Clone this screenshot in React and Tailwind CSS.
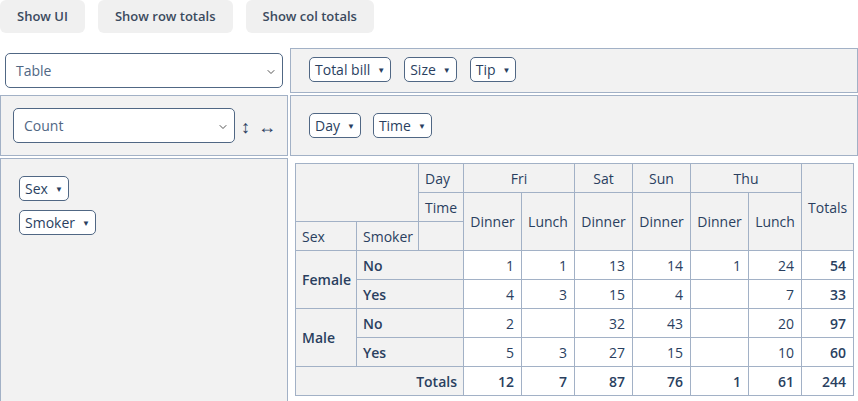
import { ChevronDown } from "lucide-react";

const font = { fontFamily: '"Open Sans", "Liberation Sans", sans-serif' };

const Chip = ({ label }) => (
  <span className="inline-flex items-center h-[25px] px-[5px] rounded-[5px] border border-[#506784] bg-white text-[14px] text-[#2a3f5f] whitespace-nowrap">
    {label}
    <span className="ml-[7px] text-[8px] leading-none">▼</span>
  </span>
);

const Select = ({ value, className }) => (
  <div
    className={`relative flex items-center h-[35px] rounded-[5px] border border-[#506784] bg-white text-[14px] text-[#506784] pl-[10px] ${className}`}
  >
    {value}
    <ChevronDown className="absolute right-[5px] top-[12px] w-[12px] h-[12px] text-[#555]" strokeWidth={2} />
  </div>
);

const rows = [
  { sex: "Female", smoker: "No", vals: [1, 1, 13, 14, 1, 24], total: 54 },
  { sex: "", smoker: "Yes", vals: [4, 3, 15, 4, "", 7], total: 33 },
  { sex: "Male", smoker: "No", vals: [2, "", 32, 43, "", 20], total: 97 },
  { sex: "", smoker: "Yes", vals: [5, 3, 27, 15, "", 10], total: 60 },
];

const th = "border border-[#a2b1c6] bg-[#f2f2f2] font-normal px-[6px] h-[29px]";
const rl = "border border-[#a2b1c6] bg-[#f2f2f2] font-semibold px-[6px] h-[29px]";
const td = "border border-[#a2b1c6] bg-white text-right px-[7px] h-[29px]";

export default function App() {
  return (
    <div className="w-[858px] h-[401px] bg-white text-[#2a3f5f] overflow-hidden" style={font}>
      {/* buttons */}
      <div className="flex gap-[13px] h-[33px]">
        {["Show UI", "Show row totals", "Show col totals"].map((b) => (
          <button
            key={b}
            className="h-[33px] px-[17px] rounded-[6px] bg-[#f0f0f0] text-[13px] font-semibold text-[#3b4a5e]"
          >
            {b}
          </button>
        ))}
      </div>

      <div className="grid grid-cols-[288px_568px] grid-rows-[45px_61px_244px] gap-[2px] mt-[15px]">
        {/* renderer */}
        <div className="pl-[5px] pt-[5px]">
          <Select value="Table" className="w-[278px]" />
        </div>
        {/* unused attrs */}
        <div className="border border-[#a2b1c6] bg-[#f2f2f2] flex items-start gap-[13px] pl-[18px] pt-[8px]">
          <Chip label="Total bill" />
          <Chip label="Size" />
          <Chip label="Tip" />
        </div>

        {/* aggregator */}
        <div className="border border-[#a2b1c6] bg-[#f2f2f2] flex items-center pl-[12px]">
          <Select value="Count" className="w-[222px]" />
          <span className="ml-[6px] text-[18px] leading-none text-[#2a3f5f]">↕</span>
          <span className="ml-[8px] text-[18px] leading-none text-[#2a3f5f]">↔</span>
        </div>
        {/* cols */}
        <div className="border border-[#a2b1c6] bg-[#f2f2f2] flex items-center gap-[12px] pl-[18px]">
          <Chip label="Day" />
          <Chip label="Time" />
        </div>

        {/* rows */}
        <div className="border border-[#a2b1c6] bg-[#f2f2f2] flex flex-col items-start gap-[9px] pl-[18px] pt-[17px]">
          <Chip label="Sex" />
          <Chip label="Smoker" />
        </div>

        {/* table */}
        <div className="pl-[5px] pt-[5px]">
          <table className="table-fixed border-collapse w-[558px] text-[14px] text-[#2a3f5f]">
            <colgroup>
              <col className="w-[61px]" />
              <col className="w-[62px]" />
              <col className="w-[45px]" />
              <col className="w-[58px]" />
              <col className="w-[53px]" />
              <col className="w-[58px]" />
              <col className="w-[58px]" />
              <col className="w-[58px]" />
              <col className="w-[53px]" />
              <col className="w-[52px]" />
            </colgroup>
            <thead>
              <tr>
                <th colSpan={2} rowSpan={2} className={th}></th>
                <th className={`${th} text-left`}>Day</th>
                <th colSpan={2} className={`${th} text-center`}>Fri</th>
                <th className={`${th} text-center`}>Sat</th>
                <th className={`${th} text-center`}>Sun</th>
                <th colSpan={2} className={`${th} text-center`}>Thu</th>
                <th rowSpan={3} className={`${th} text-center`}>Totals</th>
              </tr>
              <tr>
                <th className={`${th} text-left`}>Time</th>
                {["Dinner", "Lunch", "Dinner", "Dinner", "Dinner", "Lunch"].map((t, i) => (
                  <th key={i} rowSpan={2} className={`${th} text-center px-[4px]`}>
                    {t}
                  </th>
                ))}
              </tr>
              <tr>
                <th className={`${th} text-left`}>Sex</th>
                <th className={`${th} text-left`}>Smoker</th>
                <th className={th}></th>
              </tr>
            </thead>
            <tbody>
              {rows.map((r, i) => (
                <tr key={i}>
                  {r.sex && (
                    <th rowSpan={2} className={`${rl} text-left`}>
                      {r.sex}
                    </th>
                  )}
                  <th colSpan={2} className={`${rl} text-left`}>
                    {r.smoker}
                  </th>
                  {r.vals.map((v, j) => (
                    <td key={j} className={td}>
                      {v}
                    </td>
                  ))}
                  <td className={`${td} font-semibold`}>{r.total}</td>
                </tr>
              ))}
              <tr>
                <th colSpan={3} className={`${rl} text-right`}>Totals</th>
                {[12, 7, 87, 76, 1, 61].map((v, j) => (
                  <td key={j} className={`${td} font-semibold`}>
                    {v}
                  </td>
                ))}
                <td className={`${td} font-semibold`}>244</td>
              </tr>
            </tbody>
          </table>
        </div>
      </div>
    </div>
  );
}
